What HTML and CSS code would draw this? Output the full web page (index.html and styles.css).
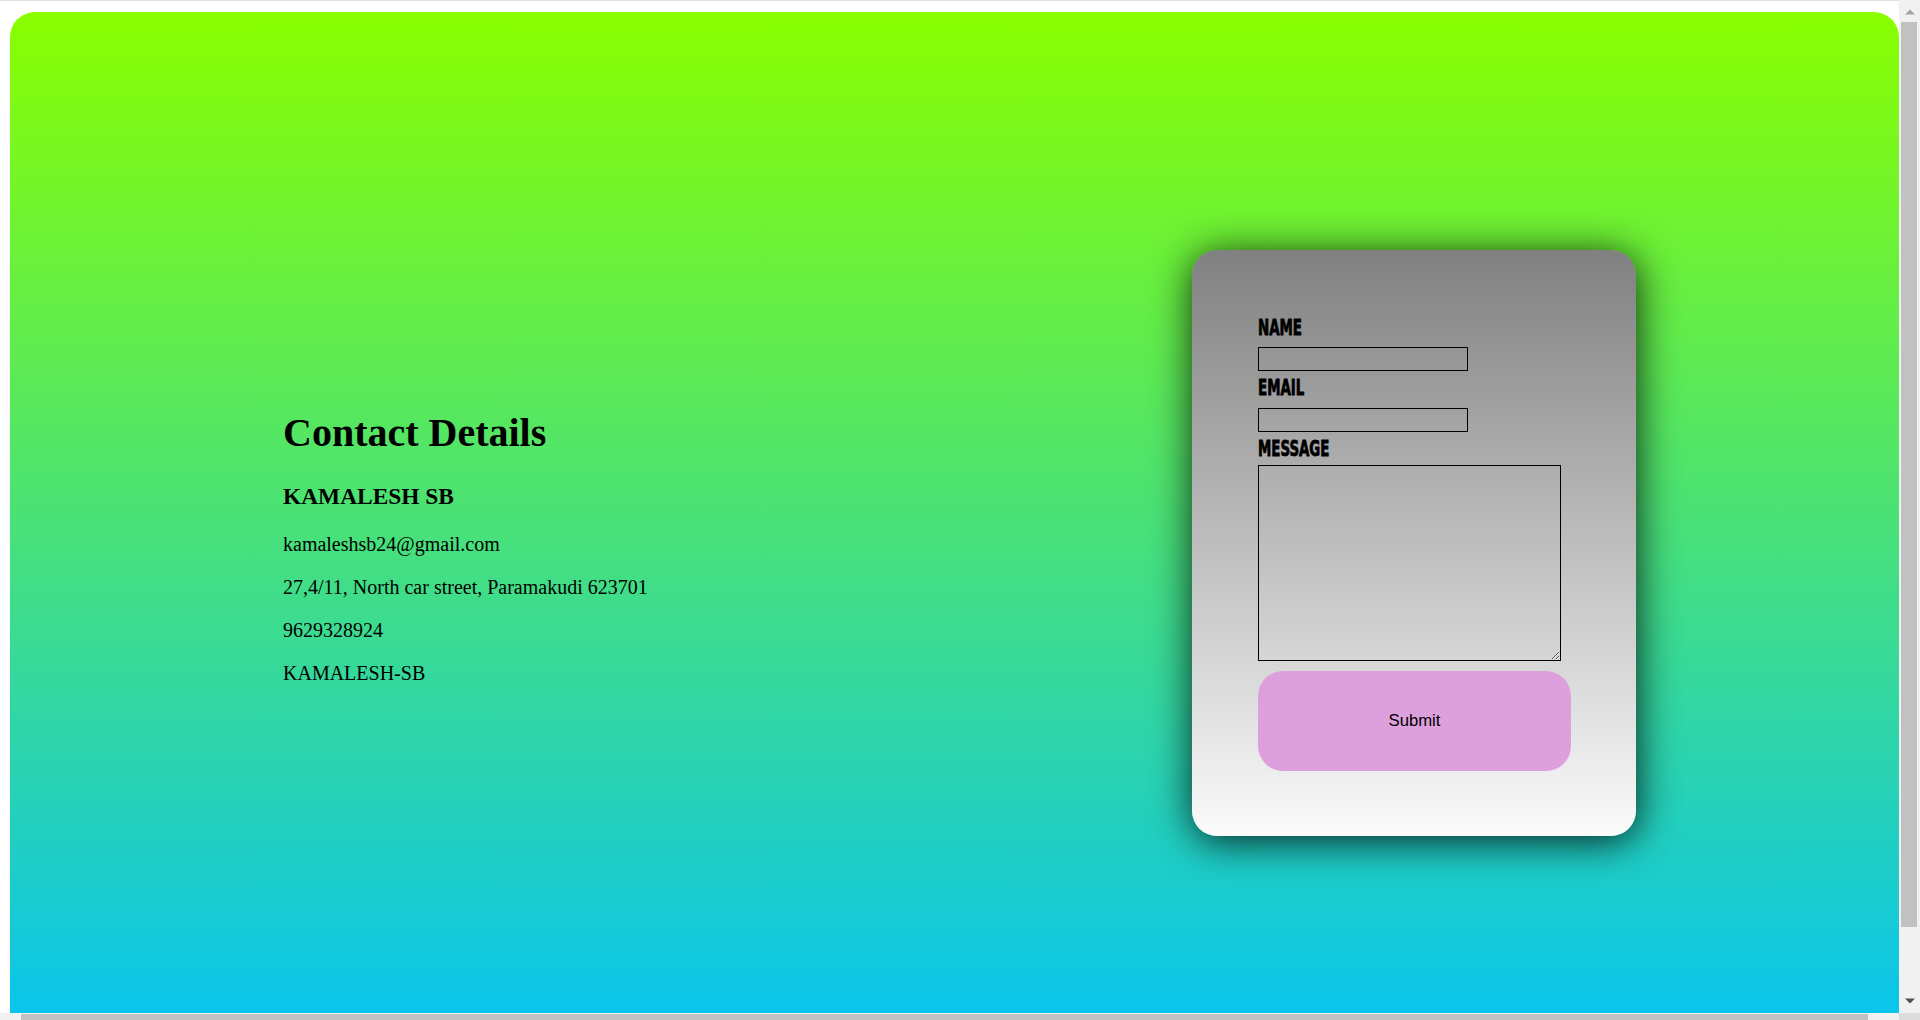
FILE: index.html
```html
<!DOCTYPE html>
<html lang="en">
<head>
<meta charset="utf-8">
<title>Contact</title>
<link rel="stylesheet" href="styles.css">
</head>
<body>
<main class="page">
  <section class="info">
    <h1 class="info-title">Contact Details</h1>
    <h3 class="info-name">KAMALESH SB</h3>
    <p class="info-line">kamaleshsb24@gmail.com</p>
    <p class="info-line">27,4/11, North car street, Paramakudi 623701</p>
    <p class="info-line">9629328924</p>
    <p class="info-line">KAMALESH-SB</p>
  </section>
  <form class="card">
    <label class="field-label" for="name">NAME</label>
    <input class="field-input" id="name" type="text">
    <label class="field-label label-next" for="email">EMAIL</label>
    <input class="field-input input-email" id="email" type="text">
    <label class="field-label label-next" for="message">MESSAGE</label>
    <textarea class="field-area" id="message"></textarea>
    <button class="submit" type="button">Submit</button>
  </form>
</main>

<div class="vscroll" aria-hidden="true">
  <div class="sb-btn sb-up"><svg width="10" height="6" viewBox="0 0 10 6"><path d="M0 5.5h10L5 0.5z" fill="#a3a3a3"/></svg></div>
  <div class="sb-track"><div class="sb-thumb"></div></div>
  <div class="sb-btn sb-down"><svg width="10" height="6" viewBox="0 0 10 6"><path d="M0 0.5h10L5 5.5z" fill="#505050"/></svg></div>
</div>
<div class="hscroll" aria-hidden="true">
  <div class="hs-btn"></div>
  <div class="hs-thumb"></div>
</div>
<div class="sb-corner" aria-hidden="true"></div>
</body>
</html>
```
FILE: styles.css
```css
html {
  border-top: 1px solid #e2e2e2;
  background: #fff;
}

body {
  margin: 11px 21px 0 10px;
  font-family: "Liberation Serif", "Times New Roman", serif;
}

.page {
  height: 1085px;
  box-sizing: border-box;
  border-radius: 25px;
  background: linear-gradient(#8aff00, #00c0ff);
  display: flex;
  justify-content: space-between;
  align-items: flex-start;
  padding: 0 263px 0 273px;
}

.info {
  padding-top: 397px;
  color: #000;
}

.info-title {
  margin: 0 0 27px;
  font-size: 40px;
  font-weight: bold;
}

.info-name {
  margin: 0 0 23px;
  font-size: 23.4px;
  font-weight: bold;
}

.info-line {
  margin: 0 0 20px;
  font-size: 20px;
}

.card {
  margin-top: 238px;
  width: 444px;
  box-sizing: border-box;
  padding: 68px 65px 65px 66px;
  border-radius: 25px;
  background: linear-gradient(#808080, #fbfbfb);
  box-shadow: 1px 5px 40px rgba(0, 0, 0, 0.85);
  display: flex;
  flex-direction: column;
  align-items: flex-start;
}

.field-label {
  display: block;
  height: 20px;
  line-height: 20px;
  font-family: "DejaVu Sans Condensed", "DejaVu Sans", sans-serif;
  font-weight: bold;
  font-size: 22px;
  color: #000;
  -webkit-text-stroke: 0.8px #000;
  transform: scaleX(0.675);
  transform-origin: left center;
  white-space: nowrap;
}

.label-next {
  margin-top: 7px;
}

.field-input {
  margin: 9px 0 0;
  width: 210px;
  height: 24px;
  box-sizing: border-box;
  border: 1px solid #000;
  background: transparent;
  padding: 0 2px;
  font-size: 16px;
}

.input-email {
  margin-top: 10px;
}

.field-area {
  margin: 6px 0 0;
  width: 303px;
  height: 196px;
  box-sizing: border-box;
  border: 1px solid #000;
  background: transparent;
  padding: 2px;
  font-size: 16px;
}

.submit {
  margin-top: 10px;
  width: 313px;
  height: 100px;
  border: none;
  border-radius: 25px;
  background: #dda0dd;
  color: #000;
  font-family: "Liberation Sans", Arial, sans-serif;
  font-size: 16.7px;
}

/* scrollbar overlay, as in the captured window */
.vscroll {
  position: fixed;
  top: 0;
  right: 0;
  width: 21px;
  height: 1013px;
  background: #f1f1f1;
  display: flex;
  flex-direction: column;
}

.sb-btn {
  height: 21px;
  flex: none;
  display: flex;
  align-items: center;
  justify-content: center;
}

.sb-up {
  padding-top: 3px;
  box-sizing: border-box;
}

.sb-down {
  padding-bottom: 3px;
  box-sizing: border-box;
}

.sb-track {
  flex: 1;
  padding: 1px 3px 0 2px;
}

.sb-thumb {
  height: 905px;
  background: #c1c1c1;
}

.hscroll {
  position: fixed;
  left: 0;
  bottom: 0;
  width: 1899px;
  height: 7px;
  background: #f1f1f1;
  display: flex;
  align-items: flex-end;
}

.hs-btn {
  width: 21px;
  height: 7px;
  flex: none;
}

.hs-thumb {
  width: 1847px;
  height: 6px;
  background: #c1c1c1;
}

.sb-corner {
  position: fixed;
  right: 0;
  bottom: 0;
  width: 21px;
  height: 7px;
  background: #dcdcdc;
}
```
